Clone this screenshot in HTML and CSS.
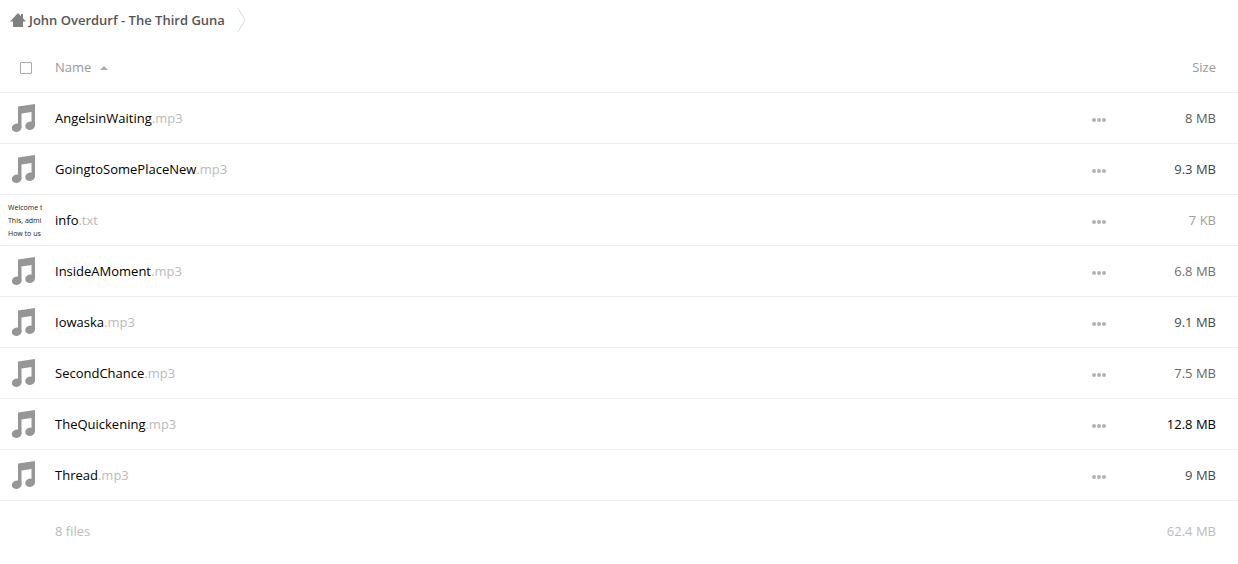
FILE: index.html
```
<!DOCTYPE html>
<html lang="en">
<head>
    <meta charset="UTF-8">
    <meta name="viewport" content="width=device-width, initial-scale=1.0">
    <title>John Overdurf - The Third Guna</title>
    <link rel="stylesheet" href="styles.css">
</head>
<body>
    <nav class="breadcrumb">
        <a href="#">
            <svg class="home" viewBox="0 0 16 16" aria-hidden="true"><path d="M8 1 0 9.500h3V15h10V9.500h3l-3-3.200V2h-2v2.200z"/></svg>
            <span>John Overdurf - The Third Guna</span>
        </a>
        <svg class="crumb-arrow" viewBox="0 0 10 26" aria-hidden="true"><path d="M1 1l7 12-7 12"/></svg>
    </nav>

    <table class="files">
        <thead>
            <tr>
                <th class="thumb"><input type="checkbox" id="selectAll" aria-label="Select all"></th>
                <th class="name"><button type="button" class="sort">Name<span class="sort-arrow"></span></button></th>
                <th class="actions"></th>
                <th class="size"><button type="button" class="sort">Size</button></th>
            </tr>
        </thead>
        <tbody id="fileList">
            <!-- Rows are inserted by script.js -->
        </tbody>
        <tfoot>
            <tr>
                <td></td>
                <td class="name">8 files</td>
                <td></td>
                <td class="size">62.4 MB</td>
            </tr>
        </tfoot>
    </table>

    <script src="script.js"></script>
</body>
</html>
```

FILE: styles.css
```
* {
    box-sizing: border-box;
}
body {
    margin: 0;
    font-family: "Open Sans", sans-serif;
    font-size: 13px;
    line-height: 20px;
    color: #000;
    background: #fff;
}
a {
    color: inherit;
    text-decoration: none;
}
button {
    padding: 0;
    border: none;
    background: none;
    font: inherit;
    color: inherit;
    cursor: pointer;
}

/* Breadcrumb */
.breadcrumb {
    display: flex;
    align-items: center;
    height: 42px;
    padding: 0 10px 2px;
}
.breadcrumb a {
    display: flex;
    align-items: center;
    gap: 3px;
    font-weight: 600;
    color: #555;
}
.home {
    width: 16px;
    height: 16px;
    fill: #808080;
}
.crumb-arrow {
    width: 10px;
    height: 26px;
    margin-left: 12px;
    fill: none;
    stroke: #ddd;
}

/* File list */
.files {
    width: 100%;
    border-spacing: 0;
}
.files th, .files td {
    height: 51px;
    padding: 0;
    border-bottom: 1px solid #eee;
    text-align: left;
    font-weight: 400;
    vertical-align: middle;
}
.files th {
    color: #999;
}
.files .thumb {
    width: 55px;
    padding-left: 8px;
}
.files .actions {
    width: 42px;
}
.files .size {
    width: 104px;
    padding-right: 22px;
    text-align: right;
}
.files tfoot td {
    height: 60px;
    border-bottom: none;
    color: #bbb;
}
.files input {
    display: block;
    appearance: none;
    width: 12px;
    height: 12px;
    margin: 1px 0 0 12px;
    border: 1px solid #aaa;
    border-radius: 1px;
    background: #fff;
}
.files input:checked {
    background: #aaa;
}
.sort {
    display: inline-flex;
    align-items: center;
}
.sort-arrow {
    margin: 2px 0 0 9px;
    border: 4px solid transparent;
    border-top: none;
    border-bottom-color: #aaa;
}
.ext {
    color: #bbb;
}
.music {
    display: block;
    width: 32px;
    height: 32px;
    fill: #969696;
}
.preview {
    width: 34px;
    height: 39px;
    overflow: hidden;
    font-size: 7px;
    line-height: 13px;
    white-space: nowrap;
    color: #222;
}
.more {
    display: block;
    padding-top: 3px;
}
.more svg {
    display: block;
    width: 14px;
    height: 4px;
    fill: #b2b2b2;
}
```

FILE: script.js
```
const files = [
    { name: 'AngelsinWaiting', ext: '.mp3', size: '8 MB', color: '#5c5c5c' },
    { name: 'GoingtoSomePlaceNew', ext: '.mp3', size: '9.3 MB', color: '#444' },
    { name: 'info', ext: '.txt', size: '7 KB', color: '#a0a0a0', preview: ['Welcome t', 'This, admi', 'How to us'] },
    { name: 'InsideAMoment', ext: '.mp3', size: '6.8 MB', color: '#707070' },
    { name: 'Iowaska', ext: '.mp3', size: '9.1 MB', color: '#484848' },
    { name: 'SecondChance', ext: '.mp3', size: '7.5 MB', color: '#666' },
    { name: 'TheQuickening', ext: '.mp3', size: '12.8 MB', color: '#000' },
    { name: 'Thread', ext: '.mp3', size: '9 MB', color: '#4a4a4a' }
];

const musicIcon = `
    <svg class="music" viewBox="0 0 32 32" aria-hidden="true">
        <path d="M10 4.500 27 2v22h-3.500V10L13.500 11.500V26H10z"/>
        <ellipse cx="8.700" cy="25.700" rx="4.900" ry="4.200" transform="rotate(-15 8.700 25.700)"/>
        <ellipse cx="22.100" cy="23.700" rx="4.900" ry="4.200" transform="rotate(-15 22.100 23.700)"/>
    </svg>`;

// Text files show their first lines instead of an icon
function renderThumb(file) {
    if (!file.preview) {
        return musicIcon;
    }
    return `<div class="preview">${file.preview.map(line => `<div>${line}</div>`).join('')}</div>`;
}

// The larger the file, the darker its size
document.getElementById('fileList').innerHTML = files.map(file => `
    <tr>
        <td class="thumb">${renderThumb(file)}</td>
        <td class="name"><a href="#">${file.name}<span class="ext">${file.ext}</span></a></td>
        <td class="actions">
            <button type="button" class="more" aria-label="More actions for ${file.name}">
                <svg viewBox="0 0 14 4"><circle cx="2" cy="2" r="2"/><circle cx="7" cy="2" r="2"/><circle cx="12" cy="2" r="2"/></svg>
            </button>
        </td>
        <td class="size" style="color: ${file.color}">${file.size}</td>
    </tr>
`).join('');
```
